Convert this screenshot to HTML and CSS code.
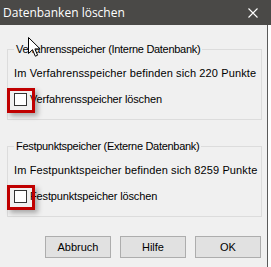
FILE: index.html
```html
<!DOCTYPE html>
<html lang="de">
<head>
  <meta charset="UTF-8">
  <title>Datenbanken löschen</title>
  <link rel="stylesheet" href="styles.css">
</head>
<body>
  <div class="window">
    <!-- Titelleiste -->
    <header class="titlebar">
      <span class="titlebar__title">Datenbanken löschen</span>
      <svg class="titlebar__close" width="10" height="10" viewBox="0 0 10 10">
        <path d="M0.5 0.5L9.5 9.5M9.5 0.5L0.5 9.5" stroke="#fff" stroke-width="1.1" fill="none"/>
      </svg>
    </header>

    <main class="dialog">
      <fieldset class="group">
        <legend class="group__legend">Verfahrensspeicher (Interne Datenbank)</legend>
        <p class="group__info">Im Verfahrensspeicher befinden sich 220 Punkte</p>
        <label class="check"><span class="check__box"></span>Verfahrensspeicher löschen</label>
      </fieldset>

      <fieldset class="group group--second">
        <legend class="group__legend">Festpunktspeicher (Externe Datenbank)</legend>
        <p class="group__info">Im Festpunktspeicher befinden sich 8259 Punkte</p>
        <label class="check"><span class="check__box"></span>Festpunktspeicher löschen</label>
      </fieldset>

      <div class="buttons">
        <button class="btn">Abbruch</button>
        <button class="btn">Hilfe</button>
        <button class="btn">OK</button>
      </div>
    </main>

    <!-- Mauszeiger -->
    <svg class="cursor" width="13" height="21" viewBox="0 0 13 21">
      <path d="M0.5 0.5V16.5L4.5 12.7L7.3 19.2L9.6 18.2L6.9 11.9H12.1Z" fill="#fff" stroke="#000" stroke-width="1" stroke-linejoin="miter"/>
    </svg>
  </div>
</body>
</html>
```

FILE: styles.css
```css
body {
  margin: 0;
  background: #fff;
  font-family: "Liberation Sans", Arial, sans-serif;
  font-size: 11px;
  color: #000;
}
.window {
  position: relative;
  width: 271px;
  height: 267px;
  display: flex;
  flex-direction: column;
  overflow: hidden;
}
/* Titelleiste */
.titlebar {
  height: 25px;
  flex: none;
  box-sizing: border-box;
  background: #4a4947;
  color: #fff;
  display: flex;
  align-items: center;
  justify-content: space-between;
  padding: 0 13px 0 3px;
  font-family: "Open Sans", sans-serif;
  font-size: 12px;
}
.titlebar__close {
  display: block;
}
/* Inhalt */
.dialog {
  flex: 1;
  width: 268px;
  box-sizing: border-box;
  background: #f0f0f0;
  border-right: 1px solid #5a5a5a;
  padding-top: 17px;
}
.group {
  margin: 0 5px 0 7px;
  padding: 0 0 13px 6px;
  border: 1px solid #dcdcdc;
  min-width: 0;
}
.group--second {
  margin-top: 19px;
}
.group__legend {
  padding: 0 2px;
  line-height: 14px;
  white-space: nowrap;
  letter-spacing: -0.3px;
}
.group__info {
  margin: 10px 0 0;
  line-height: 14px;
  white-space: nowrap;
  letter-spacing: 0.12px;
}
.check {
  display: flex;
  align-items: center;
  gap: 3px;
  margin-top: 12px;
  line-height: 14px;
  letter-spacing: -0.15px;
}
.check__box {
  position: relative;
  width: 13px;
  height: 13px;
  box-sizing: border-box;
  border: 1px solid #333;
  background: #fff;
}
/* rote Markierung um das Kontrollkästchen */
.check__box::after {
  content: "";
  position: absolute;
  left: -8px;
  top: -6px;
  width: 28px;
  height: 25px;
  box-sizing: border-box;
  border: 3px solid #c00000;
  box-shadow: 3px 3px 5px rgba(0, 0, 0, 0.3);
}
.buttons {
  display: flex;
  justify-content: flex-end;
  gap: 9px;
  margin: 19px 6px 0 0;
}
.btn {
  width: 66px;
  height: 22px;
  padding: 0;
  background: #e1e1e1;
  border: 1px solid #adadad;
  font-family: "Liberation Sans", Arial, sans-serif;
  font-size: 11px;
  color: #000;
}
.cursor {
  position: absolute;
  left: 28px;
  top: 37px;
}
```
